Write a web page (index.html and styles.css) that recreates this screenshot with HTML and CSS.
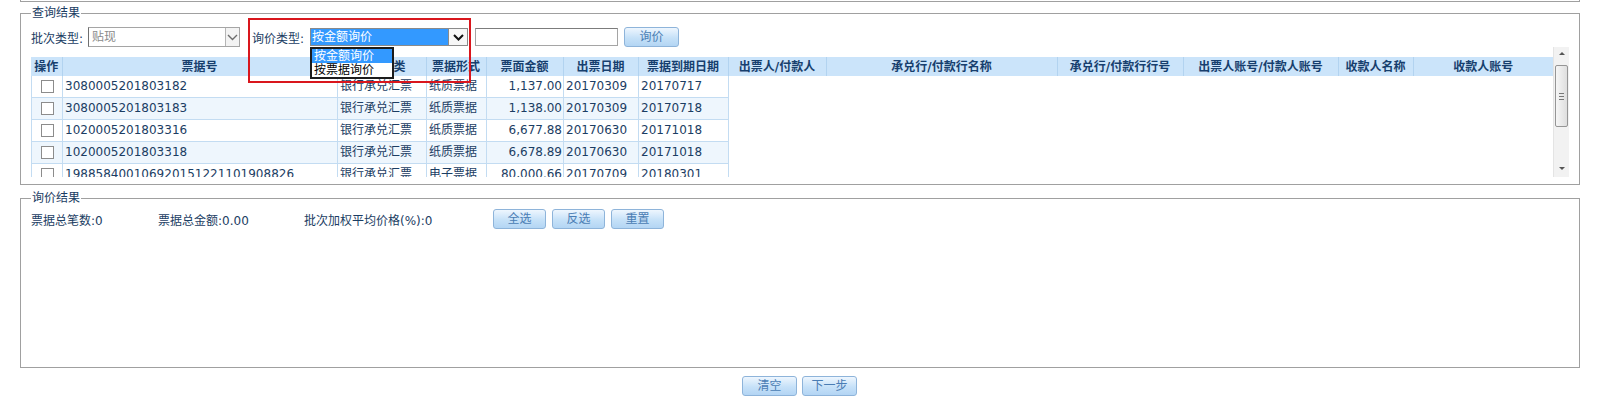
FILE: index.html
```html
<!DOCTYPE html>
<html lang="zh-CN">
<head>
	<meta charset="UTF-8">
	<title>票据询价</title>
	<link rel="stylesheet" href="styles.css">
</head>
<body>
<div class="prev-box"></div>

<fieldset class="panel panel-query">
	<legend>查询结果</legend>
	<div class="query-bar">
		<label class="q-label">批次类型:</label>
		<div class="select select-batch">
			<span class="select-text">贴现</span>
			<span class="select-btn"><svg width="11" height="7" viewBox="0 0 11 7"><polyline points="1,1 5.5,5.5 10,1" fill="none" stroke="#6d6d6d" stroke-width="1.4"/></svg></span>
		</div>
		<label class="q-label q-label-price">询价类型:</label>
		<div class="select select-price">
			<span class="select-text picked">按金额询价</span>
			<span class="select-btn"><svg width="11" height="7" viewBox="0 0 11 7"><polyline points="1,1 5.5,5.5 10,1" fill="none" stroke="#111" stroke-width="2"/></svg></span>
		</div>
		<input class="q-input" type="text">
		<button class="btn">询价</button>

		<div class="mark-box"></div>
		<ul class="drop-list">
			<li class="on">按金额询价</li>
			<li>按票据询价</li>
		</ul>
	</div>

	<div class="grid-wrap">
		<div class="grid">
			<table class="grid-head">
				<colgroup>
					<col style="width:31px"><col style="width:275px"><col style="width:89px"><col style="width:60px">
					<col style="width:77px"><col style="width:75px"><col style="width:90px"><col style="width:98px">
					<col style="width:231px"><col style="width:126px"><col style="width:155px"><col style="width:75px">
					<col style="width:140px">
				</colgroup>
				<tr>
					<th>操作</th><th>票据号</th><th>票据种类</th><th>票据形式</th><th>票面金额</th><th>出票日期</th>
					<th>票据到期日期</th><th>出票人/付款人</th><th>承兑行/付款行名称</th><th>承兑行/付款行行号</th>
					<th>出票人账号/付款人账号</th><th>收款人名称</th><th>收款人账号</th>
				</tr>
			</table>
			<table class="grid-body">
				<colgroup>
					<col style="width:31px"><col style="width:275px"><col style="width:89px"><col style="width:60px">
					<col style="width:77px"><col style="width:75px"><col style="width:90px">
				</colgroup>
				<tr>
					<td class="c-check"><span class="check"></span></td><td>3080005201803182</td><td>银行承兑汇票</td>
					<td>纸质票据</td><td class="c-num">1,137.00</td><td>20170309</td><td>20170717</td>
				</tr>
				<tr class="alt">
					<td class="c-check"><span class="check"></span></td><td>3080005201803183</td><td>银行承兑汇票</td>
					<td>纸质票据</td><td class="c-num">1,138.00</td><td>20170309</td><td>20170718</td>
				</tr>
				<tr>
					<td class="c-check"><span class="check"></span></td><td>1020005201803316</td><td>银行承兑汇票</td>
					<td>纸质票据</td><td class="c-num">6,677.88</td><td>20170630</td><td>20171018</td>
				</tr>
				<tr class="alt">
					<td class="c-check"><span class="check"></span></td><td>1020005201803318</td><td>银行承兑汇票</td>
					<td>纸质票据</td><td class="c-num">6,678.89</td><td>20170630</td><td>20171018</td>
				</tr>
				<tr>
					<td class="c-check"><span class="check"></span></td><td>198858400106920151221101908826</td><td>银行承兑汇票</td>
					<td>电子票据</td><td class="c-num">80,000.66</td><td>20170709</td><td>20180301</td>
				</tr>
			</table>
		</div>
		<div class="vscroll">
			<span class="arrow arrow-up"></span>
			<span class="thumb"><span class="grip"></span></span>
			<span class="arrow arrow-down"></span>
		</div>
	</div>
</fieldset>

<fieldset class="panel panel-price">
	<legend>询价结果</legend>
	<div class="price-body">
		<div class="stat-bar">
			<span class="stat stat-count">票据总笔数:0</span>
			<span class="stat stat-sum">票据总金额:0.00</span>
			<span class="stat stat-rate">批次加权平均价格(%):0</span>
			<button class="btn">全选</button>
			<button class="btn">反选</button>
			<button class="btn">重置</button>
		</div>
	</div>
</fieldset>

<div class="footer-bar">
	<button class="btn">清空</button>
	<button class="btn">下一步</button>
</div>
</body>
</html>
```

FILE: styles.css
```css
body {
	margin: 0;
	background: #fff;
	font-family: "DejaVu Sans", "Noto Sans CJK SC", sans-serif;
	font-size: 12px;
	color: #1b3d63;
}

.prev-box {
	height: 1px;
	margin: 0 19px 0 20px;
	border: 1px solid #a0a0a0;
	border-top: none;
}

.panel {
	margin: 4px 19px 0 20px;
	padding: 7px 10px 7px 10px;
	border: 1px solid #a0a0a0;
	min-width: 0;
}

.panel legend {
	padding: 0 1px;
	line-height: 14px;
	height: 14px;
	color: #1b3d63;
}

.panel-price {
	margin-top: 6px;
	padding-top: 4px;
	padding-bottom: 0;
}

/* 查询条件 */
.query-bar {
	position: relative;
	display: flex;
	align-items: center;
	height: 20px;
}

.q-label {
	width: 57px;
	white-space: nowrap;
}

.q-label-price {
	width: 58px;
	margin-left: 12px;
}

.select {
	display: flex;
	box-sizing: border-box;
	height: 20px;
	border: 1px solid #a5a5a5;
	background: #fff;
}

.select-batch {
	width: 152px;
	border-left-color: #6f6f6f;
}

.select-price {
	width: 158px;
	height: 18px;
	border-color: #8a8a8a;
}

.select-text {
	flex: 1;
	padding-left: 3px;
	line-height: 18px;
	color: #8a8a8a;
	white-space: nowrap;
}

.select-price .select-text {
	line-height: 16px;
}

.select-text.picked {
	background: #3399ff;
	color: #fff;
	padding-left: 1px;
}

.select-btn {
	display: flex;
	align-items: center;
	justify-content: center;
	width: 13px;
	border-left: 1px solid #b5b5b5;
	background: #f3f3f3;
}

.select-price .select-btn {
	width: 18px;
	background: #f7f7f7;
	border-left-color: #8a8a8a;
}

.q-input {
	box-sizing: border-box;
	width: 143px;
	height: 18px;
	margin: 0 0 0 7px;
	padding: 0;
	border: 1px solid #a5a5a5;
	border-top-color: #7c7c7c;
}

.btn {
	box-sizing: border-box;
	width: 55px;
	height: 20px;
	padding: 0;
	border: 1px solid #8eb4da;
	border-radius: 3px;
	background: linear-gradient(#eef6fe, #c6e1f8 55%, #b3d5f4);
	font-family: "DejaVu Sans", "Noto Sans CJK SC", sans-serif;
	font-size: 12px;
	color: #4a7db4;
	line-height: 18px;
}

.query-bar .btn {
	margin-left: 6px;
}

/* 标注红框与下拉列表 */
.mark-box {
	position: absolute;
	left: 217px;
	top: -9px;
	width: 223px;
	height: 65px;
	box-sizing: border-box;
	border: 2px solid #d9161d;
}

.drop-list {
	position: absolute;
	left: 279px;
	top: 20px;
	width: 84px;
	margin: 0;
	padding: 0;
	list-style: none;
	box-sizing: border-box;
	border: 2px solid #1c1c1c;
	background: #fff;
	z-index: 2;
}

.drop-list li {
	height: 14px;
	line-height: 14px;
	padding-left: 2px;
	color: #000;
}

.drop-list li.on {
	background: #3399ff;
	color: #fff;
}

/* 表格 */
.grid-wrap {
	display: flex;
	height: 130px;
}

.grid {
	flex: 1;
	padding-top: 10px;
	overflow: hidden;
}

.grid table {
	table-layout: fixed;
	border-collapse: collapse;
}

.grid-head {
	width: 1522px;
}

.grid-head th {
	height: 19px;
	padding: 0;
	line-height: 18px;
	background: #cbe4fa;
	border-left: 1px solid #b2d3f0;
	color: #173f6e;
	font-weight: bold;
	text-align: center;
	white-space: nowrap;
	overflow: hidden;
}

.grid-head th:first-child {
	border-left: none;
}

.grid-body {
	width: 697px;
}

.grid-body td {
	padding: 0 2px;
	line-height: 21px;
	border: 1px solid #c3dcf2;
	border-top: none;
	white-space: nowrap;
	overflow: hidden;
}

.grid-body tr.alt td {
	background: #eef6fd;
}

.grid-body td.c-num {
	text-align: right;
	padding-right: 1px;
}

.grid-body td.c-check {
	text-align: center;
	padding: 0;
}

.check {
	display: inline-block;
	width: 11px;
	height: 11px;
	border: 1px solid #8c8c8c;
	background: #fff;
	vertical-align: middle;
}

/* 滚动条 */
.vscroll {
	position: relative;
	width: 16px;
	box-sizing: border-box;
	background: #f2f2f2;
	border-left: 1px solid #e4e4e4;
}

.arrow {
	position: absolute;
	left: 5px;
	width: 0;
	height: 0;
	border-left: 3px solid transparent;
	border-right: 3px solid transparent;
}

.arrow-up {
	top: 5px;
	border-bottom: 3px solid #555;
}

.arrow-down {
	bottom: 7px;
	border-top: 3px solid #555;
}

.thumb {
	position: absolute;
	left: 1px;
	top: 18px;
	width: 13px;
	height: 62px;
	box-sizing: border-box;
	border: 1px solid #959595;
	border-radius: 2px;
	background: linear-gradient(to right, #f6f6f6, #dedede);
}

.grip {
	position: absolute;
	left: 3px;
	top: 27px;
	width: 5px;
	height: 5px;
	border-top: 1px solid #777;
	border-bottom: 1px solid #777;
}

.grip::after {
	content: "";
	position: absolute;
	left: 0;
	top: 2px;
	width: 5px;
	border-top: 1px solid #777;
}

/* 询价结果 */
.price-body {
	height: 158px;
}

.stat-bar {
	display: flex;
	align-items: center;
	height: 20px;
}

.stat {
	white-space: nowrap;
}

.stat-count {
	width: 127px;
}

.stat-sum {
	width: 146px;
}

.stat-rate {
	width: 189px;
}

.stat-bar .btn {
	width: 53px;
	margin-right: 6px;
}

.footer-bar {
	display: flex;
	justify-content: center;
	gap: 5px;
	margin-top: 8px;
}
```
